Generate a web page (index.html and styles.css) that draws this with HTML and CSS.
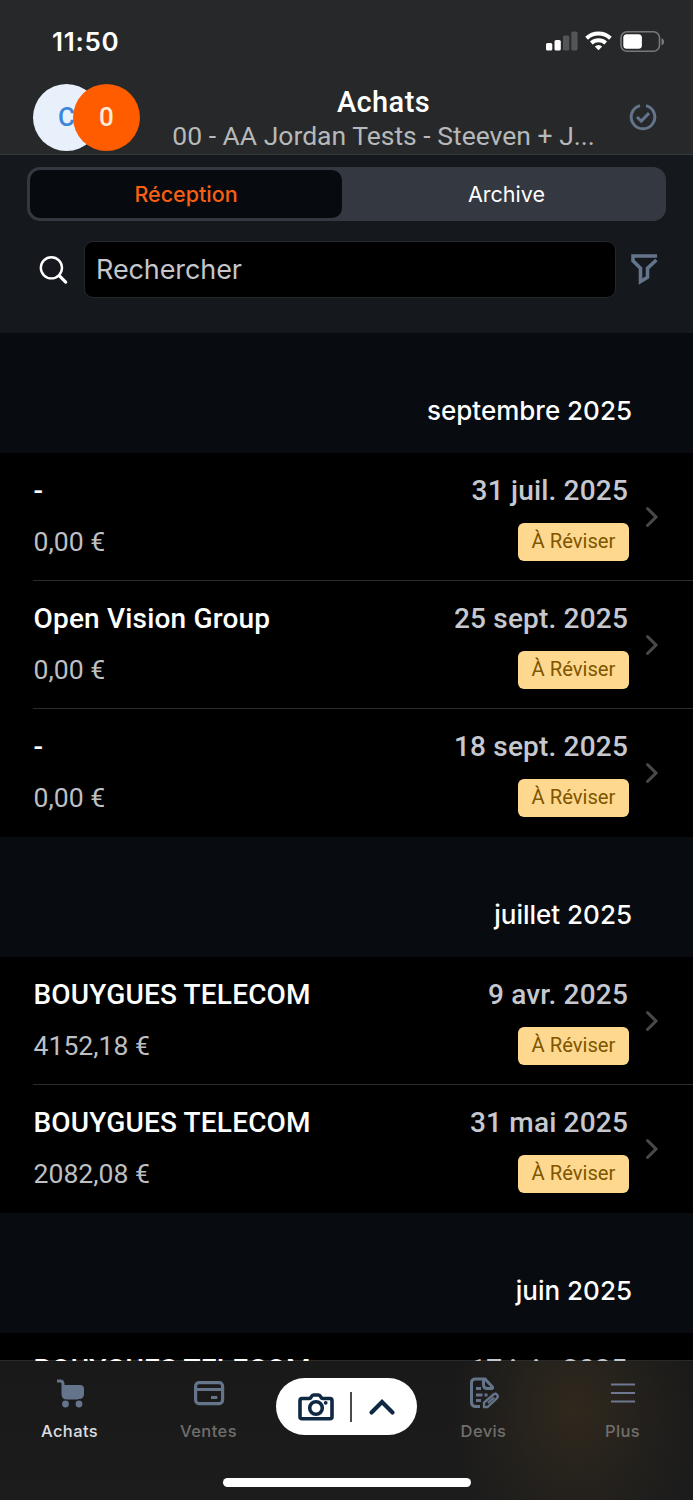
FILE: index.html
```html
<!DOCTYPE html>
<html lang="fr">
<head>
<meta charset="utf-8">
<title>Achats</title>
<link rel="stylesheet" href="styles.css">
</head>
<body>
<div class="app">
  <header class="top">
    <div class="status">
      <span class="clock">11:50</span>
      <svg class="signal" width="120" height="22" viewBox="0 0 120 22">
        <g fill="#fff"><rect x="0" y="12" width="6.3" height="7.5" rx="1.6"/><rect x="8.5" y="9" width="6.3" height="10.500" rx="1.600"/></g>
        <g fill="#545556"><rect x="17" y="4.500" width="6.300" height="15" rx="1.600"/><rect x="25.300" y="0.500" width="6.300" height="19" rx="1.600"/></g>
        <g fill="none" stroke="#fff" stroke-width="4"><path d="M40.600 7.300a17.300 17.300 0 0 1 23.800 0"/><path d="M45.300 12.100a10.700 10.700 0 0 1 14.400 0"/></g>
        <path d="M48.800 15.500a5.700 5.700 0 0 1 7.400 0L52.500 19.300z" fill="#fff"/>
        <rect x="75" y="0.800" width="38.500" height="19.400" rx="6" fill="none" stroke="#77787a" stroke-width="1.600"/>
        <rect x="77.300" y="3.200" width="18.600" height="14.600" rx="3.500" fill="#fff"/>
        <path d="M115.500 7.200c3.600 1 3.600 6 0 7z" fill="#77787a"/>
      </svg>
    </div>
    <div class="titlebar">
      <div class="avatars"><span class="avatar avatar-c">C</span><span class="avatar avatar-o">0</span></div>
      <div class="titles"><h1>Achats</h1><p>00 - AA Jordan Tests - Steeven + J...</p></div>
      <svg class="sync" width="28" height="28" viewBox="0 0 28 28" fill="none" stroke="#64748b" stroke-width="3"><path d="M17 2.600A11.800 11.800 0 1 1 11 2.600"/><path d="M8 14l4.300 4.100 7.700-8"/></svg>
    </div>
  </header>
  <section class="controls">
    <div class="segments"><span class="segment active">Réception</span><span class="segment">Archive</span></div>
    <div class="search">
      <svg width="30" height="30" viewBox="0 0 30 30" fill="none" stroke="#fff" stroke-width="2.400" stroke-linecap="round"><circle cx="12.400" cy="12.800" r="10.600"/><path d="M20.200 20.600l6.500 6.500" stroke-width="3.200"/></svg>
      <div class="field">Rechercher</div>
      <svg class="filter" width="27" height="31" viewBox="0 0 27 31" fill="none" stroke="#64748b" stroke-width="3.600"><path d="M26 2H2v4.800l7.500 7.500v13.200l7-4.200v-9L25.400 6"/></svg>
    </div>
  </section>
  <main class="list">
    <h2>septembre 2025</h2>
    <article class="row"><div class="body"><b>-</b><span>0,00 €</span></div><div class="meta"><time>31 juil. 2025</time><em>À Réviser</em></div><svg class="chev" viewBox="0 0 14 22"><path d="M2.500 2.500l8.500 8.500-8.500 8.500"/></svg></article>
    <article class="row"><div class="body"><b>Open Vision Group</b><span>0,00 €</span></div><div class="meta"><time>25 sept. 2025</time><em>À Réviser</em></div><svg class="chev" viewBox="0 0 14 22"><path d="M2.500 2.500l8.500 8.500-8.500 8.500"/></svg></article>
    <article class="row last"><div class="body"><b>-</b><span>0,00 €</span></div><div class="meta"><time>18 sept. 2025</time><em>À Réviser</em></div><svg class="chev" viewBox="0 0 14 22"><path d="M2.500 2.500l8.500 8.500-8.500 8.500"/></svg></article>
    <h2>juillet 2025</h2>
    <article class="row"><div class="body"><b>BOUYGUES TELECOM</b><span>4152,18 €</span></div><div class="meta"><time>9 avr. 2025</time><em>À Réviser</em></div><svg class="chev" viewBox="0 0 14 22"><path d="M2.500 2.500l8.500 8.500-8.500 8.500"/></svg></article>
    <article class="row last"><div class="body"><b>BOUYGUES TELECOM</b><span>2082,08 €</span></div><div class="meta"><time>31 mai 2025</time><em>À Réviser</em></div><svg class="chev" viewBox="0 0 14 22"><path d="M2.500 2.500l8.500 8.500-8.500 8.500"/></svg></article>
    <h2>juin 2025</h2>
    <article class="row peek"><div class="body"><b>BOUYGUES TELECOM</b></div><div class="meta"><time>17 juin 2025</time></div></article>
  </main>
  <nav class="tabs">
    <div class="tabrow">
      <a class="tab on"><svg width="30" height="30" viewBox="0 0 30 30"><path d="M2 3h3.500Q8 3 8 6v10q0 4 4 4h11" fill="none" stroke="#64748b" stroke-width="3"/><path d="M7 7h18q4 0 4 4v5q0 5-5 5H12q-5 0-5-5z" fill="#64748b"/><circle cx="10.500" cy="26" r="3.400" fill="#64748b"/><circle cx="24" cy="26" r="3.400" fill="#64748b"/></svg>Achats</a>
      <a class="tab"><svg width="32" height="30" viewBox="0 0 32 30" fill="none" stroke="#64748b" stroke-width="3.200"><rect x="2.600" y="4.600" width="27" height="21" rx="3.500"/><path d="M3 11.500h26M18 19.500h6.300"/></svg>Ventes</a>
      <div class="capture">
        <svg width="36" height="30" viewBox="0 0 36 30" fill="none" stroke="#0f2942" stroke-width="3.600" stroke-linejoin="round"><path d="M4 6.500h7q1.500 0 2.200-1.500 1-2 2.300-2h5q1.300 0 2.300 2 .7 1.500 2.200 1.500h7q2 0 2 2v16.200q0 2-2 2H4q-2 0-2-2V8.500q0-2 2-2z"/><circle cx="18" cy="16" r="6.300"/><circle cx="27.700" cy="10.800" r="1.900" fill="#0f2942" stroke="none"/></svg>
        <i></i>
        <svg width="28" height="18" viewBox="0 0 28 18" fill="none" stroke="#0f2942" stroke-width="4.200" stroke-linecap="round"><path d="M3.500 14.500L14 4l10.500 10.500"/></svg>
      </div>
      <a class="tab"><svg width="32" height="32" viewBox="0 0 32 32" fill="none" stroke="#64748b" stroke-width="3"><path d="M12 29.500H8q-4.500 0-4.500-4.500V6q0-4 4-4h9.500l7.500 8v2M15.500 2v5.500q0 4 4 4H25M8 11.500h5M8 18h6.500M16.500 18h3M8 23.500h5"/><path d="M16 30v-4.500l9.500-8q2-1.500 3.600.2 1.500 1.900-.3 3.600L19.500 30zM20 26l6-5.500" stroke-width="2.300"/></svg>Devis</a>
      <a class="tab"><svg width="26" height="30" viewBox="0 0 26 30" stroke="#6f7890" stroke-width="2"><path d="M1 6.500h24M1 15h24M1 23.500h24"/></svg>Plus</a>
    </div>
    <div class="home"></div>
  </nav>
</div>
</body>
</html>
```

FILE: styles.css
```css
* { box-sizing: border-box; }
body { margin: 0; background: #000; font-family: Roboto, "Liberation Sans", sans-serif; color: #fff; }
svg { display: block; flex: none; }
h1, h2, p { margin: 0; font-weight: 500; }
.app { width: 693px; height: 1500px; display: flex; flex-direction: column; overflow: hidden; }

.top { height: 155px; flex: none; background: #262829; border-bottom: 1px solid #323c3e; }
.status { height: 84px; padding: 31px 27px 0 52px; display: flex; justify-content: space-between; align-items: flex-start; }
.clock { font: 600 26px/22px Inter, sans-serif; letter-spacing: .7px; }
.titlebar { height: 70px; display: flex; align-items: center; padding: 0 36px 0 33px; overflow: hidden; }
.avatars { display: flex; flex: none; width: 108px; height: 68px; margin-bottom: 3px; }
.avatar { width: 67px; height: 67px; border-radius: 50%; font: 500 26px/67px Roboto, sans-serif; text-align: center; flex: none; }
.avatar-c { background: #e8f1fb; color: #3d85d8; }
.avatar-o { background: #ff5c00; color: #fdebd8; margin-left: -27px; z-index: 1; }
.titles { flex: 1; text-align: center; margin-left: -3px; }
.titles h1 { font-size: 29px; line-height: 34px; letter-spacing: .4px; }
.titles p { font-size: 26.5px; font-weight: 400; line-height: 34px; color: #b6b8ba; white-space: nowrap; }
.sync { margin-bottom: 5px; }

.controls { height: 178px; flex: none; padding: 12px 27px 0; background: #15181d; display: flex; flex-direction: column; gap: 20px; }
.segments { height: 54px; padding: 3px; border-radius: 13px; background: #343840; display: flex; }
.segment { flex: 1; padding-left: 8px; border-radius: 10px; text-align: center; font: 400 21.500px/48px Inter, sans-serif; }
.segment.active { background: #070b0f; color: #f75f13; flex: 0 0 312px; padding: 0; font-weight: 500; }
.search { display: flex; align-items: center; padding: 0 8px 0 12px; height: 57px; }
.field { flex: 1; margin: 0 15px; height: 57px; padding-left: 11px; border: 1px solid #25282b; border-radius: 9px; background: #000; color: #c4c6ca; font: 400 27px/56px Inter, sans-serif; letter-spacing: -.1px; }

.list { height: 1028px; flex: none; overflow: hidden; background: #000; }
.list h2 { height: 120px; padding: 62px 61px 0 0; background: #080b10; text-align: right; font: 500 26px/32px Inter, sans-serif; }
.row { height: 128px; margin-left: 33px; padding: 21px 34px 0 1px; border-bottom: 1px solid #2a2b2c; display: flex; }
.row.last { border-bottom-color: transparent; }
.body { flex: 1; display: flex; flex-direction: column; gap: 17px; white-space: nowrap; }
.body b { margin-left: -.5px; font-size: 28px; font-weight: 500; line-height: 34px; letter-spacing: .18px; }
.body span { margin-left: -.5px; font-size: 26.6px; line-height: 34px; color: #bdbfc2; }
.meta { display: flex; flex-direction: column; align-items: flex-end; gap: 15px; }
.meta time { margin-right: 1px; font-size: 28px; font-weight: 500; line-height: 34px; letter-spacing: .18px; color: #c5c8cf; white-space: nowrap; }
.meta em { width: 111px; height: 38px; border-radius: 6px; background: #ffd88f; color: #7d5600; font: 400 20.200px/37px Roboto, sans-serif; text-align: center; }
.chev { width: 14px; height: 22px; margin: 32px 0 0 16px; fill: none; stroke: #48494b; stroke-width: 3; stroke-linecap: round; }
.row.peek { border: 0; margin-left: 0; padding: 20px 65px 0 34px; background: linear-gradient(#000 27px, #292929 27px); }

.tabs { height: 139px; flex: none; background: radial-gradient(ellipse 125px 150px at 575px 50px, #30281d, rgba(42, 37, 29, .65) 50%, transparent), linear-gradient(#191919, #1c1c1c); }
.tabrow { height: 121px; padding-top: 15px; display: flex; }
.tab { width: 139px; display: flex; flex-direction: column; align-items: center; font: 500 16.500px/24px Inter, sans-serif; letter-spacing: .4px; color: #706f6c; }
.tab svg { height: 34px; margin-bottom: 9px; }
.tab.on { color: #dcdee0; }
.capture { width: 141px; height: 57px; margin: 2px -3px 0 -2px; border-radius: 29px; background: #fff; display: flex; align-items: center; padding: 0 21px 0 22px; justify-content: space-between; flex: none; }
.capture i { width: 2px; height: 30px; background: #4a4b4d; }
.home { width: 248px; height: 9px; margin: -4px auto 0; border-radius: 5px; background: #fff; }
```
